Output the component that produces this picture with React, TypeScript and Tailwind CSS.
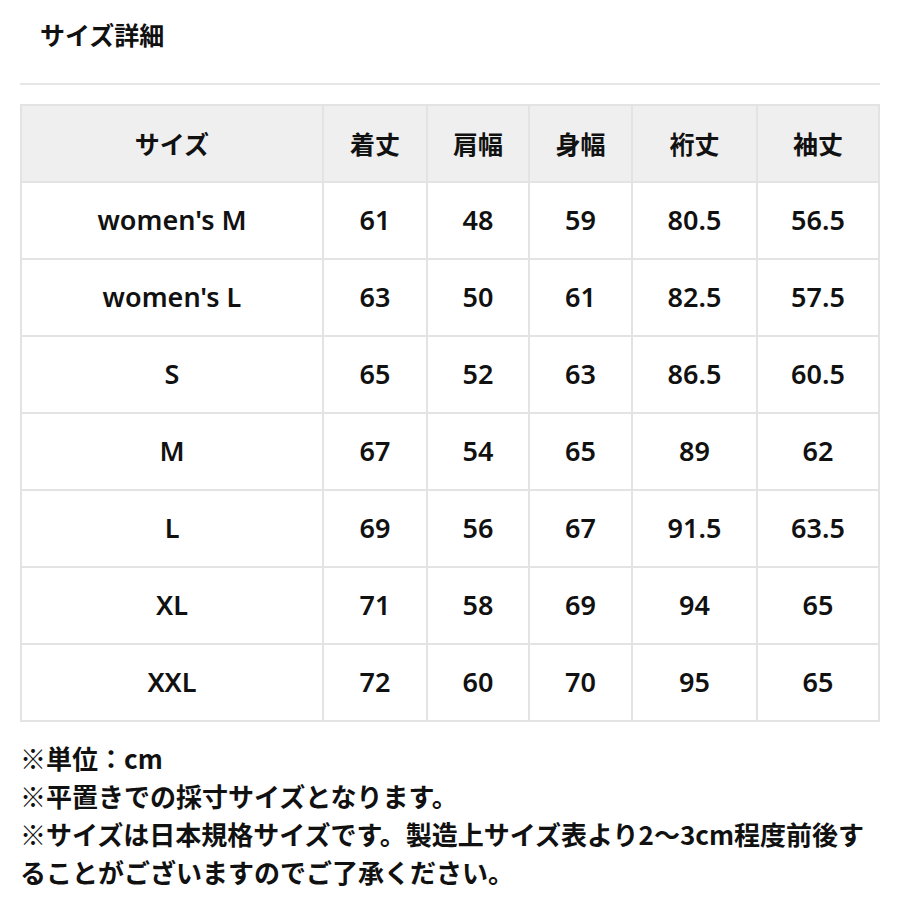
const headers = ["サイズ", "着丈", "肩幅", "身幅", "裄丈", "袖丈"];

const rows: string[][] = [
  ["women's M", "61", "48", "59", "80.5", "56.5"],
  ["women's L", "63", "50", "61", "82.5", "57.5"],
  ["S", "65", "52", "63", "86.5", "60.5"],
  ["M", "67", "54", "65", "89", "62"],
  ["L", "69", "56", "67", "91.5", "63.5"],
  ["XL", "71", "58", "69", "94", "65"],
  ["XXL", "72", "60", "70", "95", "65"],
];

const colWidths = ["w-[302px]", "w-[104px]", "w-[102px]", "w-[103px]", "w-[125px]", "w-[122px]"];

const notes = [
  "※単位：cm",
  "※平置きでの採寸サイズとなります。",
  "※サイズは日本規格サイズです。製造上サイズ表より2〜3cm程度前後す",
  "ることがございますのでご了承ください。",
];

export default function App() {
  return (
    <div className="h-[900px] w-[900px] bg-white font-['Noto_Sans_CJK_JP',sans-serif] text-[#111]">
      <div className="px-5 pt-[17px]">
        <h1 className="pl-5 text-[25px] font-bold leading-[34px]">サイズ詳細</h1>
        <div className="mt-[32px] h-[2px] bg-[#e6e6e6]" />
        <table className="mt-[19px] w-[858px] table-fixed border-collapse">
          <colgroup>
            {colWidths.map((w, i) => (
              <col key={i} className={w} />
            ))}
          </colgroup>
          <thead>
            <tr className="h-[77px] bg-[#efefef]">
              {headers.map((h) => (
                <th
                  key={h}
                  className="border-2 border-[#e3e3e3] text-center text-[25px] font-bold"
                >
                  {h}
                </th>
              ))}
            </tr>
          </thead>
          <tbody>
            {rows.map((r) => (
              <tr key={r[0]} className="h-[77px]">
                {r.map((c, i) => (
                  <td
                    key={i}
                    className="border-2 border-[#e3e3e3] text-center font-['Noto_Sans','Noto_Sans_CJK_JP',sans-serif] text-[27px] font-semibold"
                  >
                    {c}
                  </td>
                ))}
              </tr>
            ))}
          </tbody>
        </table>
        <div className="mt-[17px] text-[26px] font-bold leading-[38px]">
          {notes.map((n) => (
            <p key={n} className="whitespace-nowrap">{n}</p>
          ))}
        </div>
      </div>
    </div>
  );
}
